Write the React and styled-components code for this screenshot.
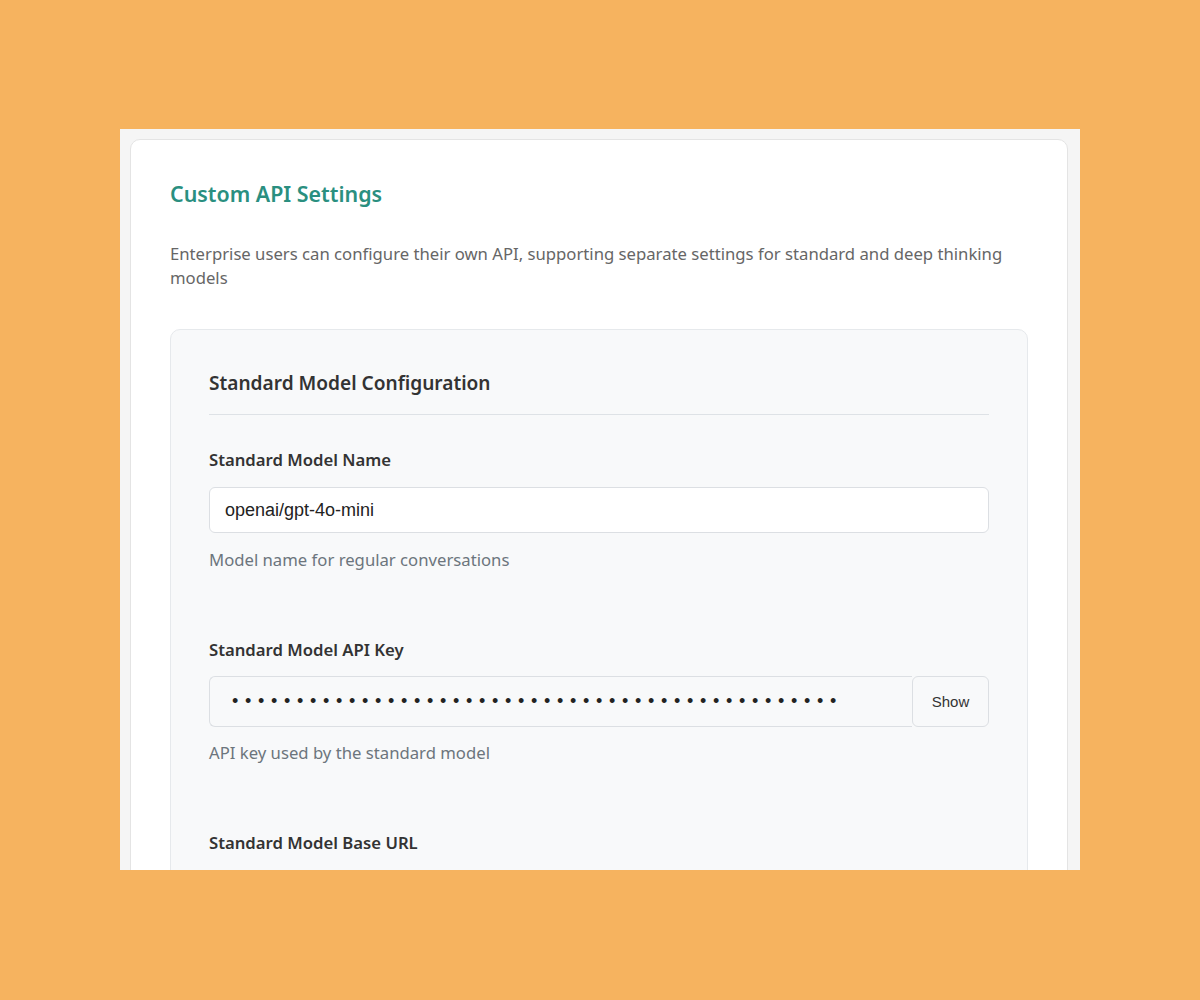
import React from "react";
import styled, { createGlobalStyle } from "styled-components";

const GlobalStyle = createGlobalStyle`
    body {
        margin: 0;
        background: #f6b35f;
        font-family: "Noto Sans", "Open Sans", sans-serif;
    }
`;

const Stage = styled.div`
    padding: 129px 0 0 120px;
    height: 1000px;
    box-sizing: border-box;
`;

const Frame = styled.div`
    width: 960px;
    height: 741px;
    overflow: hidden;
    background: #f5f5f5;
    padding: 10px 12px 0 10px;
    box-sizing: border-box;
`;

const Card = styled.section`
    background: #fff;
    border: 1px solid #e4e4e4;
    border-radius: 10px;
    padding: 40px 39px;

    & > h2 {
        margin: 0 0 34px;
        font-size: 21.4px;
        line-height: 28px;
        font-weight: 600;
        color: #2a8f80;
    }

    & > p {
        margin: 0 0 39px;
        font-size: 16.7px;
        line-height: 24px;
        color: #666;
    }
`;

const Panel = styled.div`
    background: #f8f9fa;
    border: 1px solid #e6e9ec;
    border-radius: 10px;
    padding: 38px 38px 40px;

    & > h3 {
        margin: 0 0 33px;
        padding-bottom: 16px;
        border-bottom: 1px solid #dee2e6;
        font-size: 19.1px;
        line-height: 30px;
        font-weight: 600;
        color: #333;
    }
`;

const Field = styled.div`
    margin-bottom: 66px;

    label {
        display: block;
        margin-bottom: ${({ $gap }) => $gap || 15}px;
        font-size: 16.7px;
        line-height: 24px;
        font-weight: 600;
        color: #333;
    }

    small {
        display: block;
        margin-top: ${({ $gap }) => $gap || 15}px;
        font-size: 16.7px;
        line-height: 24px;
        color: #6c757d;
    }
`;

const TextInput = styled.input`
    display: block;
    width: 100%;
    box-sizing: border-box;
    height: ${({ $height }) => $height || 46}px;
    padding: 0 15px;
    border: 1px solid #dcdfe3;
    border-radius: 6px;
    background: ${({ $muted }) => ($muted ? "#f8f9fa" : "#fff")};
    font-family: "Liberation Sans", Arial, sans-serif;
    font-size: 18px;
    color: #222;
    outline: none;
`;

const InputGroup = styled.div`
    display: flex;

    ${TextInput} {
        flex: 1;
        border-radius: 6px 0 0 6px;
        border-right: none;
        letter-spacing: 6.7px;
        padding-left: 22px;
    }
`;

const ToggleButton = styled.button`
    width: 77px;
    border: 1px solid #dcdfe3;
    border-radius: 6px;
    background: #f8f9fa;
    font-family: "Liberation Sans", Arial, sans-serif;
    font-size: 15px;
    color: #333;
    cursor: pointer;
`;

export default function App() {
    return (
        <Stage>
            <GlobalStyle />
            <Frame>
                <Card>
                    <h2>Custom API Settings</h2>
                    <p>
                        Enterprise users can configure their own API, supporting separate settings for
                        standard and deep thinking models
                    </p>
                    <Panel>
                        <h3>Standard Model Configuration</h3>
                        <Field>
                            <label>Standard Model Name</label>
                            <TextInput type="text" defaultValue="openai/gpt-4o-mini" />
                            <small>Model name for regular conversations</small>
                        </Field>
                        <Field $gap={14}>
                            <label>Standard Model API Key</label>
                            <InputGroup>
                                <TextInput
                                    type="password"
                                    $muted
                                    $height={51}
                                    defaultValue={"x".repeat(47)}
                                />
                                <ToggleButton type="button">Show</ToggleButton>
                            </InputGroup>
                            <small>API key used by the standard model</small>
                        </Field>
                        <Field>
                            <label>Standard Model Base URL</label>
                            <TextInput type="text" />
                        </Field>
                    </Panel>
                </Card>
            </Frame>
        </Stage>
    );
}
